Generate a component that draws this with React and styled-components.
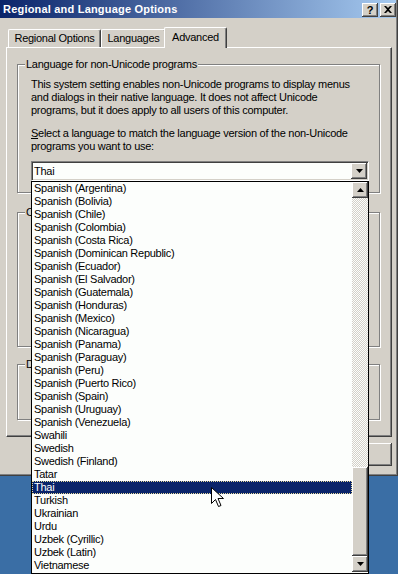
import React from "react";
import styled, { createGlobalStyle } from "styled-components";

const GlobalStyle = createGlobalStyle`
  html, body { margin: 0; padding: 0; }
  body {
    background: #3a6ea5;
    font-family: "Liberation Sans", Arial, sans-serif;
    font-size: 11px;
    letter-spacing: -0.27px;
    color: #000;
  }
`;

const Desktop = styled.div`
  position: relative;
  width: 398px;
  height: 574px;
  overflow: hidden;
  background: #3a6ea5;
`;

const Window = styled.div`
  width: 398px;
  box-sizing: border-box;
  padding: 0 2px 2px 0;
  background: #d4d0c8;
  box-shadow: inset -1px -1px 0 #404040, inset -2px -2px 0 #808080;
`;

const TitleBar = styled.div`
  height: 18px;
  display: flex;
  align-items: center;
  padding-left: 3px;
  background: linear-gradient(to right, #0a246a, #a6caf0);
  color: #fff;
  font-weight: bold;
  letter-spacing: 0.2px;
`;

const Title = styled.div`
  flex: 1;
`;

const CaptionButton = styled.div`
  width: 16px;
  height: 14px;
  box-sizing: border-box;
  margin: 1px 0 0 ${(p) => (p.$gap ? "2px" : "0")};
  display: flex;
  align-items: center;
  justify-content: center;
  background: #d4d0c8;
  color: #000;
  font-size: 11px;
  letter-spacing: 0;
  box-shadow: inset -1px -1px 0 #404040, inset 1px 1px 0 #fff,
    inset -2px -2px 0 #808080;
`;

const Body = styled.div`
  padding: 9px 4px 8px 6px;
`;

const TabRow = styled.div`
  display: flex;
  align-items: flex-end;
  height: 20px;
  padding-left: 2px;
`;

const Tab = styled.div`
  position: relative;
  z-index: ${(p) => (p.$active ? 2 : 1)};
  box-sizing: border-box;
  width: ${(p) => p.$w + (p.$active ? 4 : 0)}px;
  height: ${(p) => (p.$active ? 21 : 18)}px;
  margin: 0 ${(p) => (p.$active ? -2 : 0)}px ${(p) => (p.$active ? -1 : 0)}px;
  padding-top: ${(p) => (p.$active ? 3 : 2)}px;
  text-align: center;
  background: #d4d0c8;
  border-top: 1px solid #fff;
  border-left: 1px solid #fff;
  border-right: 1px solid #404040;
  border-radius: 2px 2px 0 0;
  box-shadow: inset -1px 0 0 #808080;
`;

const Panel = styled.div`
  box-sizing: border-box;
  height: 390px;
  padding: 10px 0 0 10px;
  background: #d4d0c8;
  border-top: 1px solid #fff;
  border-left: 1px solid #fff;
  border-right: 1px solid #404040;
  border-bottom: 1px solid #404040;
  box-shadow: inset -1px -1px 0 #808080;
`;

const Group = styled.fieldset`
  width: 363px;
  box-sizing: border-box;
  margin: ${(p) => p.$top || 0}px 0 0 0;
  padding: 7px 10px ${(p) => p.$bottom || 11}px 13px;
  border: 1px solid #808080;
  box-shadow: inset 1px 1px 0 #fff, 1px 1px 0 #fff;
  line-height: 13px;
`;

const Legend = styled.legend`
  margin-left: -6px;
  padding: 0 1px;
  line-height: 13px;
  background: #d4d0c8;
  white-space: nowrap;
`;

const Text = styled.div`
  white-space: nowrap;
  line-height: 13px;
  margin-top: ${(p) => p.$top || 0}px;
`;

const Combo = styled.div`
  margin-top: 8px;
  width: 338px;
  height: 20px;
  box-sizing: border-box;
  display: flex;
  align-items: center;
  background: #fcfefc;
  border: 1px solid;
  border-color: #808080 #fff #fff #808080;
  box-shadow: inset 1px 1px 0 #404040, inset -1px -1px 0 #d4d0c8;
  padding: 1px 1px 1px 2px;
`;

const ComboText = styled.div`
  flex: 1;
`;

const ArrowButton = styled.div`
  width: 16px;
  height: 16px;
  box-sizing: border-box;
  display: flex;
  align-items: center;
  justify-content: center;
  background: #d4d0c8;
  box-shadow: inset -1px -1px 0 #404040, inset 1px 1px 0 #fff,
    inset -2px -2px 0 #808080;
`;

const ListView = styled.div`
  height: 110px;
  width: 338px;
  box-sizing: border-box;
  background: #fcfefc;
  border: 1px solid;
  border-color: #808080 #fff #fff #808080;
  box-shadow: inset 1px 1px 0 #404040;
`;

const CheckRow = styled.div`
  display: flex;
  gap: 5px;
  height: 26px;
`;

const CheckBox = styled.div`
  width: 13px;
  height: 13px;
  box-sizing: border-box;
  background: #fcfefc;
  border: 1px solid;
  border-color: #808080 #fff #fff #808080;
  box-shadow: inset 1px 1px 0 #404040;
`;

const Buttons = styled.div`
  display: flex;
  justify-content: flex-end;
  gap: 6px;
  margin-top: 6px;
`;

const PushButton = styled.div`
  width: 75px;
  height: 23px;
  box-sizing: border-box;
  display: flex;
  align-items: center;
  justify-content: center;
  background: #d4d0c8;
  box-shadow: inset -1px -1px 0 #404040, inset 1px 1px 0 #fff,
    inset -2px -2px 0 #808080;
`;

const Popup = styled.div`
  position: absolute;
  left: 31px;
  top: 181px;
  width: 338px;
  height: 393px;
  box-sizing: border-box;
  display: flex;
  background: #fcfefc;
  border: 1px solid #000;
  z-index: 5;
`;

const Items = styled.div`
  flex: 1;
`;

const Item = styled.div`
  height: 13px;
  line-height: 13px;
  padding-left: 2px;
  white-space: nowrap;
  background: ${(p) => (p.$selected ? "#0a246a" : "transparent")};
  color: ${(p) => (p.$selected ? "#fff" : "#000")};
  outline: ${(p) => (p.$selected ? "1px dotted #e8dc9c" : "none")};
  outline-offset: -1px;
`;

const ScrollBar = styled.div`
  width: 16px;
  display: flex;
  flex-direction: column;
  height: 390px;
`;

const Track = styled.div`
  flex: 1;
  display: flex;
  flex-direction: column;
  justify-content: flex-end;
  background: repeating-conic-gradient(#d4d0c8 0% 25%, #fcfefc 0% 50%) 0 0 / 2px 2px;
`;

const Thumb = styled.div`
  height: 89px;
  background: #d4d0c8;
  box-shadow: inset -1px -1px 0 #404040, inset 1px 1px 0 #fff,
    inset -2px -2px 0 #808080;
`;

const Cursor = styled.svg`
  position: absolute;
  left: 211px;
  top: 487px;
  z-index: 10;
`;

const Down = () => (
  <svg width="7" height="4" viewBox="0 0 7 4">
    <polygon points="0,0 7,0 3.5,4" fill="#000" />
  </svg>
);

const Up = () => (
  <svg width="7" height="4" viewBox="0 0 7 4">
    <polygon points="0,4 7,4 3.5,0" fill="#000" />
  </svg>
);

const languages = [
  "Spanish (Argentina)",
  "Spanish (Bolivia)",
  "Spanish (Chile)",
  "Spanish (Colombia)",
  "Spanish (Costa Rica)",
  "Spanish (Dominican Republic)",
  "Spanish (Ecuador)",
  "Spanish (El Salvador)",
  "Spanish (Guatemala)",
  "Spanish (Honduras)",
  "Spanish (Mexico)",
  "Spanish (Nicaragua)",
  "Spanish (Panama)",
  "Spanish (Paraguay)",
  "Spanish (Peru)",
  "Spanish (Puerto Rico)",
  "Spanish (Spain)",
  "Spanish (Uruguay)",
  "Spanish (Venezuela)",
  "Swahili",
  "Swedish",
  "Swedish (Finland)",
  "Tatar",
  "Thai",
  "Turkish",
  "Ukrainian",
  "Urdu",
  "Uzbek (Cyrillic)",
  "Uzbek (Latin)",
  "Vietnamese",
];

export default function App() {
  return (
    <Desktop>
      <GlobalStyle />
      <Window>
        <TitleBar>
          <Title>Regional and Language Options</Title>
          <CaptionButton>?</CaptionButton>
          <CaptionButton $gap>
            <svg width="8" height="7" viewBox="0 0 8 7">
              <path d="M0 0h2l2 2 2-2h2L5 3.5 8 7H6L4 5 2 7H0l3-3.5z" fill="#000" />
            </svg>
          </CaptionButton>
        </TitleBar>
        <Body>
          <TabRow>
            <Tab $w={93}>Regional Options</Tab>
            <Tab $w={65}>Languages</Tab>
            <Tab $w={59} $active>Advanced</Tab>
          </TabRow>
          <Panel>
            <Group>
              <Legend>Language for non-Unicode programs</Legend>
              <Text>
                This system setting enables non-Unicode programs to display menus
                <br />
                and dialogs in their native language. It does not affect Unicode
                <br />
                programs, but it does apply to all users of this computer.
              </Text>
              <Text $top={10}>
                <u>S</u>elect a language to match the language version of the non-Unicode
                <br />
                programs you want to use:
              </Text>
              <Combo>
                <ComboText>Thai</ComboText>
                <ArrowButton>
                  <Down />
                </ArrowButton>
              </Combo>
            </Group>
            {/* only the first letter of these group captions shows beside the open list */}
            <Group $top={13} $bottom={10}>
              <Legend>C</Legend>
              <ListView />
            </Group>
            <Group $top={11} $bottom={15}>
              <Legend>D</Legend>
              <CheckRow>
                <CheckBox />
              </CheckRow>
            </Group>
          </Panel>
          <Buttons>
            <PushButton>OK</PushButton>
            <PushButton>Cancel</PushButton>
            <PushButton>Apply</PushButton>
          </Buttons>
        </Body>
      </Window>

      <Popup>
        <Items>
          {languages.map((l) => (
            <Item key={l} $selected={l === "Thai"}>
              {l}
            </Item>
          ))}
        </Items>
        <ScrollBar>
          <ArrowButton>
            <Up />
          </ArrowButton>
          <Track>
            <Thumb />
          </Track>
          <ArrowButton>
            <Down />
          </ArrowButton>
        </ScrollBar>
      </Popup>

      <Cursor width="13" height="21" viewBox="0 0 13 21">
        <path
          d="M0.5 0.5v16l4-4 3 7 2.5-1-3-7h5.5z"
          fill="#fff"
          stroke="#000"
          strokeWidth="1"
        />
      </Cursor>
    </Desktop>
  );
}
